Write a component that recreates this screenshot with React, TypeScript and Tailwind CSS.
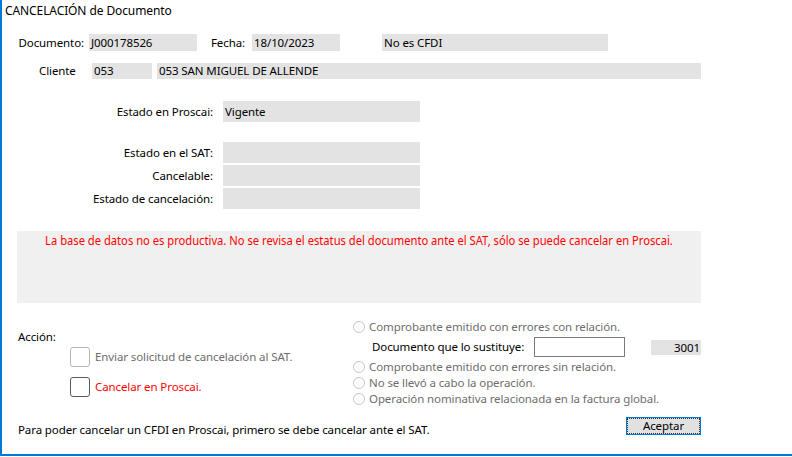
import React from "react";

const field = "bg-[#e3e3e3] h-[17px] flex items-center pl-[2px] text-black";

function Radio({ label }: { label: string }) {
  return (
    <div className="flex items-center h-[16px]">
      <span className="w-[12px] h-[12px] rounded-full border border-[#c6c6c6] bg-white" />
      <span className="ml-[4px] text-[#6d6d6d]">{label}</span>
    </div>
  );
}

function Check({ label, dark }: { label: string; dark?: boolean }) {
  return (
    <div className="flex items-center h-[20px] pl-[68px]">
      <span
        className={`w-[20px] h-[20px] rounded-[3px] border bg-white ${
          dark ? "border-[#5a5a5a]" : "border-[#b5b5b5]"
        }`}
      />
      <span className={`ml-[5px] ${dark ? "text-[#ff0000]" : "text-[#6d6d6d]"}`}>
        {label}
      </span>
    </div>
  );
}

export default function App() {
  const satRows = ["Estado en el SAT:", "Cancelable:", "Estado de cancelación:"];

  return (
    <div
      className="w-[792px] h-[457px] bg-white text-[11.5px] tracking-[-0.1px] leading-[16px] text-black"
      style={{ fontFamily: '"Noto Sans", "Open Sans", sans-serif' }}
    >
      <div className="h-[456px] border-l-2 border-b-2 border-[#0078d7] overflow-hidden">
        {/* Title */}
        <div className="pt-[3px] pl-[3px] h-[19px] text-[12px]">CANCELACIÓN de Documento</div>

        {/* Documento / Fecha */}
        <div className="flex items-center mt-[15px] h-[17px]">
          <div className="w-[82px] text-right">Documento:</div>
          <div className={`${field} ml-[5px] w-[108px]`}>J000178526</div>
          <div className="ml-[14px] w-[41px]">Fecha:</div>
          <div className={`${field} w-[88px]`}>18/10/2023</div>
          <div className={`${field} ml-[42px] w-[226px]`}>No es CFDI</div>
        </div>

        {/* Cliente */}
        <div className="flex items-center mt-[12px] h-[16px]">
          <div className="w-[90px] pl-[37px]">Cliente</div>
          <div className={`${field} !h-[16px] w-[60px]`}>053</div>
          <div className={`${field} !h-[16px] ml-[5px] w-[544px]`}>
            053 SAN MIGUEL DE ALLENDE
          </div>
        </div>

        {/* Estado en Proscai */}
        <div className="flex items-center mt-[22px] h-[21px]">
          <div className="w-[211px] text-right">Estado en Proscai:</div>
          <div className={`${field} !h-[21px] ml-[10px] w-[197px]`}>Vigente</div>
        </div>

        {/* Estado SAT */}
        <div className="flex flex-col gap-[2px] mt-[20px]">
          {satRows.map((r) => (
            <div key={r} className="flex items-center h-[21px]">
              <div className="w-[211px] text-right">{r}</div>
              <div className="bg-[#e3e3e3] h-[21px] ml-[10px] w-[197px]" />
            </div>
          ))}
        </div>

        {/* Mensaje */}
        <div className="ml-[15px] mt-[22px] w-[684px] h-[72px] bg-[#f0f0f0] pt-[1px] flex justify-center">
          <span className="inline-block h-[18px] whitespace-nowrap text-[#ff0000] text-[13px] tracking-normal scale-x-[0.86]">
            La base de datos no es productiva. No se revisa el estatus del documento ante el SAT, sólo se puede cancelar en Proscai.
          </span>
        </div>

        {/* Acción */}
        <div className="flex mt-[16px]">
          <div className="w-[351px] pt-[10px]">
            <div className="pl-[16px] h-[16px]">Acción:</div>
            <div className="mt-[2px]">
              <Check label="Enviar solicitud de cancelación al SAT." />
            </div>
            <div className="mt-[10px]">
              <Check label="Cancelar en Proscai." dark />
            </div>
          </div>
          <div className="flex flex-col">
            <Radio label="Comprobante emitido con errores con relación." />
            <div className="flex items-center h-[20px] mt-[2px]">
              <div className="pl-[19px] w-[181px]">Documento que lo sustituye:</div>
              <div className="w-[91px] h-[20px] border border-[#7a7a7a] bg-white" />
              <div className="ml-[26px] w-[50px] h-[15px] bg-[#e3e3e3] text-right pr-[1px] leading-[15px]">
                3001
              </div>
            </div>
            <div className="mt-[2px]">
              <Radio label="Comprobante emitido con errores sin relación." />
              <Radio label="No se llevó a cabo la operación." />
              <Radio label="Operación nominativa relacionada en la factura global." />
            </div>
          </div>
        </div>

        {/* Pie */}
        <div className="flex items-start mt-[10px]">
          <div className="pl-[16px] w-[624px] mt-[5px]">
            Para poder cancelar un CFDI en Proscai, primero se debe cancelar ante el SAT.
          </div>
          <button className="w-[75px] h-[18px] border border-[#0078d7] bg-[#e1e1e1] p-[1px]">
            <span className="flex items-center justify-center w-full h-full outline outline-1 outline-dotted outline-[#333] leading-[14px]">
              Aceptar
            </span>
          </button>
        </div>
      </div>
    </div>
  );
}
